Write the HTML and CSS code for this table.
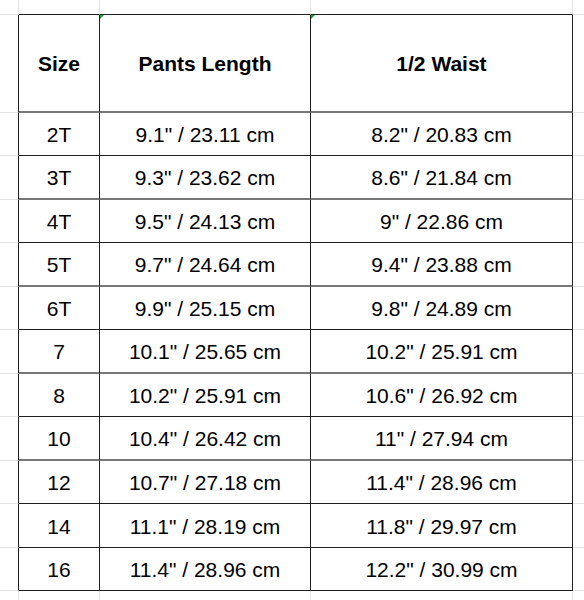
FILE: index.html
```html
<!DOCTYPE html>
<html>
<head>
<meta charset="utf-8">
<link rel="stylesheet" href="styles.css">
</head>
<body>
<div class="sheet">
  <!-- row 0 (above table) -->
  <div class="cell"></div>
  <div class="cell top-edge"></div>
  <div class="cell top-edge"></div>
  <div class="cell top-edge"></div>
  <div class="cell"></div>

  <!-- header -->
  <div class="cell left-edge"></div>
  <div class="cell t soft head">Size</div>
  <div class="cell t soft head note">Pants Length</div>
  <div class="cell t soft head note">1/2 Waist</div>
  <div class="cell"></div>

  <div class="cell left-edge"></div>
  <div class="cell t">2T</div>
  <div class="cell t">9.1" / 23.11 cm</div>
  <div class="cell t">8.2" / 20.83 cm</div>
  <div class="cell"></div>

  <div class="cell left-edge"></div>
  <div class="cell t soft">3T</div>
  <div class="cell t soft">9.3" / 23.62 cm</div>
  <div class="cell t soft">8.6" / 21.84 cm</div>
  <div class="cell"></div>

  <div class="cell left-edge"></div>
  <div class="cell t">4T</div>
  <div class="cell t">9.5" / 24.13 cm</div>
  <div class="cell t">9" / 22.86 cm</div>
  <div class="cell"></div>

  <div class="cell left-edge"></div>
  <div class="cell t soft">5T</div>
  <div class="cell t soft">9.7" / 24.64 cm</div>
  <div class="cell t soft">9.4" / 23.88 cm</div>
  <div class="cell"></div>

  <div class="cell left-edge"></div>
  <div class="cell t">6T</div>
  <div class="cell t">9.9" / 25.15 cm</div>
  <div class="cell t">9.8" / 24.89 cm</div>
  <div class="cell"></div>

  <div class="cell left-edge"></div>
  <div class="cell t soft">7</div>
  <div class="cell t soft">10.1" / 25.65 cm</div>
  <div class="cell t soft">10.2" / 25.91 cm</div>
  <div class="cell"></div>

  <div class="cell left-edge"></div>
  <div class="cell t">8</div>
  <div class="cell t">10.2" / 25.91 cm</div>
  <div class="cell t">10.6" / 26.92 cm</div>
  <div class="cell"></div>

  <div class="cell left-edge"></div>
  <div class="cell t soft">10</div>
  <div class="cell t soft">10.4" / 26.42 cm</div>
  <div class="cell t soft">11" / 27.94 cm</div>
  <div class="cell"></div>

  <div class="cell left-edge"></div>
  <div class="cell t">12</div>
  <div class="cell t">10.7" / 27.18 cm</div>
  <div class="cell t">11.4" / 28.96 cm</div>
  <div class="cell"></div>

  <div class="cell left-edge"></div>
  <div class="cell t">14</div>
  <div class="cell t">11.1" / 28.19 cm</div>
  <div class="cell t">11.8" / 29.97 cm</div>
  <div class="cell"></div>

  <div class="cell left-edge"></div>
  <div class="cell t">16</div>
  <div class="cell t">11.4" / 28.96 cm</div>
  <div class="cell t">12.2" / 30.99 cm</div>
  <div class="cell"></div>

  <!-- row below table -->
  <div class="cell"></div>
  <div class="cell"></div>
  <div class="cell"></div>
  <div class="cell"></div>
  <div class="cell"></div>
</div>
</body>
</html>
```
FILE: styles.css
```css
html, body {
  margin: 0;
  padding: 0;
  background: #ffffff;
  overflow: hidden;
}

.sheet {
  display: grid;
  grid-template-columns: 19px 81px 211px 262px 120px;
  grid-template-rows: 15px 98px 43px 44px 43px 44px 43px 44px 43px 44px 43px 44px 43px 60px;
  width: 584px;
  height: 600px;
  overflow: hidden;
  font-family: "Liberation Sans", Arial, sans-serif;
  font-size: 21px;
  color: #000;
}

.cell {
  box-sizing: border-box;
  border-right: 1px solid #e2e3e3;
  border-bottom: 1px solid #e2e3e3;
  display: flex;
  align-items: center;
  justify-content: center;
  white-space: nowrap;
  position: relative;
}

.top-edge {
  border-bottom-color: #1f1f1f;
}

.left-edge {
  border-right-color: #1f1f1f;
}

.t {
  border-right-color: #1f1f1f;
  border-bottom-color: #1f1f1f;
  padding-top: 2px;
}

.t.soft {
  border-bottom: 2px solid #777777;
}

.head {
  font-weight: bold;
}

.note::before {
  content: "";
  position: absolute;
  left: 0;
  top: 0;
  width: 0;
  height: 0;
  border-top: 4px solid #1e9a3a;
  border-right: 4px solid transparent;
}
```
